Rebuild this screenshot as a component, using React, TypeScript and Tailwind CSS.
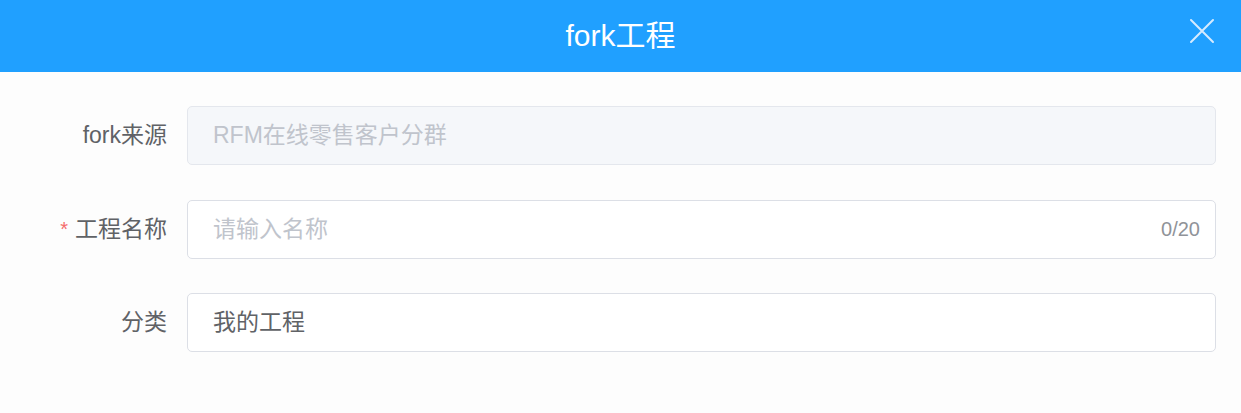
import React from "react";

const font = { fontFamily: '"Liberation Sans", "Noto Sans CJK SC", sans-serif' };

function Row({ label, required, children }: { label: string; required?: boolean; children: React.ReactNode }) {
  return (
    <div className="flex items-center h-[59px]">
      <div className="w-[187px] pr-[20px] flex justify-end items-center text-[23px] text-[#606266]">
        {required && <span className="text-[#f56c6c] mr-[7px] text-[20px]">*</span>}
        <span>{label}</span>
      </div>
      {children}
    </div>
  );
}

export default function App() {
  return (
    <div className="w-[1241px] h-[413px] bg-[#fdfdfd] overflow-hidden" style={font}>
      <div className="h-[72px] bg-[#20a0ff] relative flex items-center justify-center">
        <span className="text-white text-[30px] leading-none">fork工程</span>
        <svg className="absolute left-[1189px] top-[18px]" width="26" height="26" viewBox="0 0 26 26">
          <path d="M2 2 L24 24 M24 2 L2 24" stroke="#d6ebff" strokeWidth="2" strokeLinecap="round" />
        </svg>
      </div>
      <div className="pt-[34px] pr-[25px] flex flex-col gap-[34.5px]">
        <Row label="fork来源">
          <div className="flex-1 h-full rounded-[5px] border border-[#e4e7ed] bg-[#f5f7fa] flex items-center pl-[25px] text-[23px] text-[#c0c4cc]">
            RFM在线零售客户分群
          </div>
        </Row>
        <Row label="工程名称" required>
          <div className="flex-1 h-full rounded-[5px] border border-[#dcdfe6] bg-white flex items-center pl-[25px] pr-[15px] text-[23px]">
            <span className="flex-1 text-[#c0c4cc]">请输入名称</span>
            <span className="text-[20px] text-[#909399]">0/20</span>
          </div>
        </Row>
        <Row label="分类">
          <div className="flex-1 h-full rounded-[5px] border border-[#dcdfe6] bg-white flex items-center pl-[25px] text-[23px] text-[#606266]">
            我的工程
          </div>
        </Row>
      </div>
    </div>
  );
}
